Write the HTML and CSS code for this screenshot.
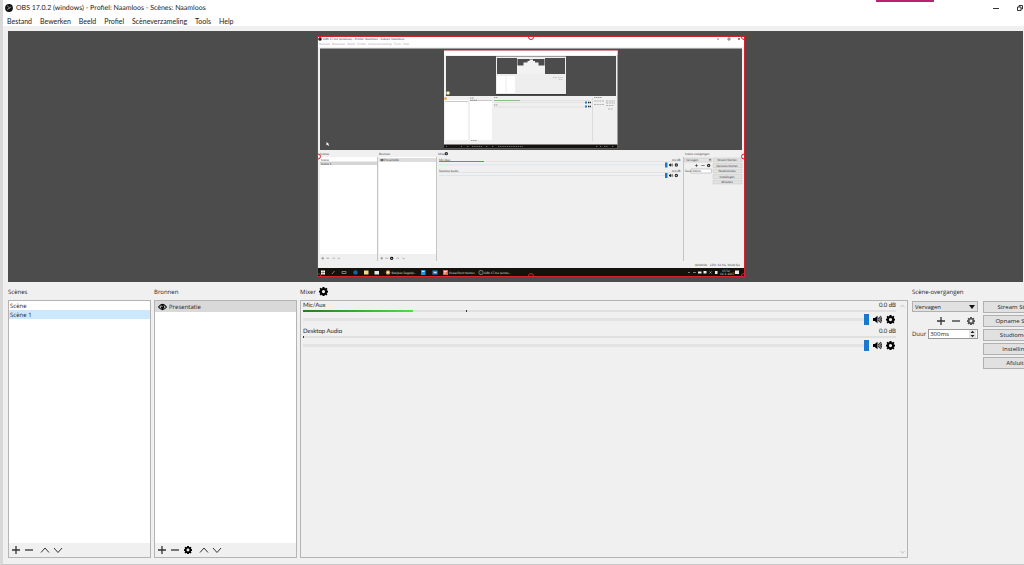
FILE: index.html
```html
<!DOCTYPE html>
<html lang="nl">
<head>
<meta charset="utf-8">
<title>OBS 17.0.2 (windows) - Profiel: Naamloos - Scènes: Naamloos</title>
<link rel="stylesheet" href="styles.css">
</head>
<body>
<svg class="defs" width="0" height="0" aria-hidden="true">
  <symbol id="gear" viewBox="0 0 16 16"><path fill="currentColor" fill-rule="evenodd" d="M6.300 0h3.400l.4 2.200 1 .4 1.900-1.300 2 2-1.300 1.900.4 1 2.200.4v3.200l-2.200.4-.4 1 1.300 1.900-2 2-1.900-1.300-1 .4-.4 2.200H6.300l-.4-2.200-1-.4L3 15.100l-2-2 1.300-1.900-.4-1L0 9.800V6.600l1.900-.4.4-1L1 3.300l2-2 1.900 1.300 1-.4zM8 5.200a2.900 2.900 0 1 0 0 5.800 2.900 2.900 0 0 0 0-5.800z"/></symbol>
  <symbol id="plus" viewBox="0 0 10 10"><path d="M5 1v8M1 5h8" fill="none" stroke="currentColor" stroke-width="1.300"/></symbol>
  <symbol id="minus" viewBox="0 0 10 10"><path d="M1 5h8" fill="none" stroke="currentColor" stroke-width="1.300"/></symbol>
  <symbol id="up" viewBox="0 0 10 10"><path d="M1 7.500 5 3l4 4.500" fill="none" stroke="currentColor"/></symbol>
  <symbol id="down" viewBox="0 0 10 10"><path d="M1 3l4 4.500L9 3" fill="none" stroke="currentColor"/></symbol>
  <symbol id="speaker" viewBox="0 0 10 10"><path d="M0 3.200h2L5 .8v8.400L2 6.800H0z" fill="currentColor"/><path d="M6 3q1.300 2 0 4M7.200 2q2 3 0 6M8.400 1q2.600 4 0 8" fill="none" stroke="currentColor"/></symbol>
  <symbol id="eye" viewBox="0 0 10 8"><path d="M.6 4Q5-1.800 9.400 4 5 9.800.6 4z" fill="#fff" stroke="#000" stroke-width="1.200"/><circle cx="5" cy="4" r="2.200"/><circle cx="4.400" cy="3.300" r=".6" fill="#fff"/></symbol>
</svg>

<div class="window">
  <span class="share-tab"></span>
  <header class="titlebar">
    <svg class="logo" viewBox="0 0 16 16"><circle cx="8" cy="8" r="7.800" fill="#111"/><path d="M5 3q1 4 4 4.500M12.500 6q-4 .5-4.500 4M4 11q4-.5 4.500-3.500" fill="none" stroke="#bbb" stroke-width="1.300"/></svg>
    <h1 class="title">OBS 17.0.2 (windows) - Profiel: Naamloos - Scènes: Naamloos</h1>
    <button class="caption" aria-label="Minimaliseren"><svg viewBox="0 0 6 6"><path d="M0 3.500h6" stroke="#333"/></svg></button>
    <button class="caption" aria-label="Herstellen"><svg viewBox="0 0 6 6"><path d="M.5 2h3.500v3.500H.5zM2 2V.5h3.500V4H4" fill="none" stroke="#333"/></svg></button>
  </header>
  <nav class="menubar">
    <button>Bestand</button><button>Bewerken</button><button>Beeld</button><button>Profiel</button><button>Scèneverzameling</button><button>Tools</button><button>Help</button>
  </nav>

  <main class="content">
    <section class="preview" aria-label="Voorbeeld">
      <svg class="capture" viewBox="317 36 428 241">
        <rect x="317" y="36" width="428" height="241" fill="#f0f0f0"/>
        <rect x="317" y="36" width="428" height="11" fill="#fff"/>
        <circle cx="320" cy="39" r="1.700"/>
        <g class="micro">
          <text x="323" y="40">OBS 17.0.2 (windows) - Profiel: Naamloos - Scènes: Naamloos</text>
          <text x="319" y="45" fill="#baa">Bestand &#160; Bewerken &#160; Beeld &#160; Profiel &#160; Scèneverzameling &#160; Tools &#160; Help</text>
        </g>
        <path d="M717 39h2M728 38h2v2h-2zM738 38l2 2m0-2-2 2" stroke="#333" stroke-width=".6" fill="none"/>
        <rect x="320" y="48.500" width="422" height="101.500" fill="#4c4c4c"/>
        <path d="M326.500 142v3.500l1-.8 1 1.300.5-.5-.8-1.200h1z" fill="#fff"/>

        <rect x="444" y="50" width="173.500" height="98.500" fill="#f0f0f0"/>
        <rect x="444" y="51" width="173.500" height="4" fill="#fff"/>
        <rect x="446" y="56" width="170" height="40" fill="#4c4c4c"/>
        <path d="M444 50.500h173" stroke="#c66" stroke-width=".7"/>
        <rect x="496" y="56.500" width="70" height="38" fill="#eee"/>
        <rect x="497" y="58" width="68" height="16" fill="#4c4c4c"/>
        <path d="M497 76h18v17h-18z" fill="#fff"/>
        <path d="M506 76v17" stroke="#ddd" stroke-width=".6"/>
        <rect x="517" y="58" width="28" height="16" fill="#f2f2f2"/>
        <path d="M517.500 59h27v6.500h-6V62.500h-3.500V61h-2v-1.500h-3.500V61h-2v1.500h-4v3h-6z" fill="#4c4c4c"/>
        <path d="M496 94.500h70" stroke="#222" stroke-width=".8"/>
        <path d="M553 77.500h4M558 77.500h5M559 79.500h4" stroke="#bbb" stroke-width=".8" stroke-dasharray="1.500 .6"/>
        <path d="M445 100h23v40h-23zM470 100h22v40h-22z" fill="#fff"/>
        <path d="M445 101.500h23M470 100.500h22" stroke="#bbb" stroke-width=".8"/>
        <path d="M470 98h4M470 100.300h7M494 97.500h4M494 105h4M594 97.500h8M471 140.500h6" stroke="#777" stroke-width=".7" stroke-dasharray="1.500 .5"/>
        <path d="M494 100.500h26" stroke="#6db36d" stroke-width=".8"/>
        <path d="M520 100.500h70M494 102.500h92M494 107h92" stroke="#dadada" stroke-width=".7"/>
        <path d="M585 102.500h2M585 106.500h2" stroke="#1679d2" stroke-width="2"/>
        <path d="M588 102.500h3M588 106.500h3" stroke="#222" stroke-width="1.700" stroke-dasharray="1.200 .5"/>
        <path d="M592.500 98v43" stroke="#ccc" stroke-width=".6"/>
        <path d="M594 101h10M594 104.500h10M606 101h9M606 103h9M606 105.500h8M608 109h5" stroke="#aaa" stroke-width=".9" stroke-dasharray="2 .7"/>
        <circle cx="448" cy="93" r="1.800" fill="#f4efba"/><circle cx="445.500" cy="98.500" r="1.500" fill="#efad4c"/>
        <rect x="444" y="144.500" width="173.500" height="4" fill="#14110e"/>
        <path d="M446 146.500h1m14 0h1m5 0h2m3 0h10m4 0h2m4 0h2m4 0h25m73 0h2m2 0h2m2 0h4m4 0h2" stroke="#888" stroke-width=".8" stroke-dasharray="1.300 .9"/>

        <g class="micro">
          <text x="320" y="155">Scènes</text><text x="379" y="155">Bronnen</text><text x="438" y="155">Mixer</text><text x="685" y="155">Scène-overgangen</text>
        </g>
        <path d="M320 157h57v97h-57zM379 157h57v97h-57z" fill="#fff"/>
        <path d="M377.500 157v104M436.500 157v104M683.500 157v104" stroke="#c4c4c4"/>
        <rect x="320" y="161.500" width="57" height="3.500" fill="#d6d6d6"/>
        <rect x="379" y="158" width="57" height="4" fill="#ddd"/>
        <use href="#gear" x="444.500" y="152" width="3.500" height="3.500"/>
        <use href="#eye" x="380" y="158.500" width="4" height="3"/>
        <g class="micro">
          <text x="321" y="161">Scène</text><text x="321" y="164.500">Scène 1</text><text x="384" y="161.200">Presentatie</text>
          <text x="439" y="160.500">Mic/Aux</text><text x="439" y="171.500">Desktop Audio</text><text x="672" y="160.500">0.0 dB</text><text x="672" y="171.500">0.0 dB</text>
        </g>
        <path d="M439 161.500h45" stroke="#4aa84a"/>
        <path d="M484 161.500h194M439 172.500h239" stroke="#ddd" stroke-width=".7"/>
        <path d="M439 164.800h227M439 175.500h227" stroke="#d3e3ee" stroke-width=".8"/>
        <path d="M665 162.500h2.500v5H665zM665 173h2.500v5H665z" fill="#1679d2"/>
        <use href="#speaker" x="669" y="163" width="4" height="4"/><use href="#speaker" x="669" y="173.500" width="4" height="4"/>
        <use href="#gear" x="674.500" y="163" width="3.500" height="4"/><use href="#gear" x="674.500" y="173.500" width="3.500" height="4"/>
        <rect x="684.500" y="158" width="27" height="4" fill="#e3e3e3" stroke="#bbb" stroke-width=".4"/>
        <rect x="691" y="169" width="20.500" height="4" fill="#fff" stroke="#888" stroke-width=".4"/>
        <path d="M709 159.500h2l-1 1.300z"/>
        <use href="#plus" x="694.500" y="163.500" width="4" height="4"/><use href="#minus" x="701" y="163.500" width="4" height="4"/><use href="#gear" x="707" y="163.500" width="3.500" height="4"/>
        <g fill="#e1e1e1" stroke="#bbb" stroke-width=".4"><path d="M713 158h29v4h-29zM713 163.500h29v4h-29zM713 169h29v4h-29zM713 174.500h29v4h-29zM713 180h29v4h-29z"/></g>
        <g class="micro">
          <text x="686" y="161">Vervagen</text><text x="685" y="172">Duur</text><text x="692" y="172">300ms</text>
          <g text-anchor="middle"><text x="727" y="161">Stream Starten</text><text x="727" y="166.500">Opname Starten</text><text x="727" y="172">Studiomodus</text><text x="727" y="177.500">Instellingen</text><text x="727" y="183">Afsluiten</text></g>
          <text x="695" y="266">00:00:00</text><text x="710" y="266">CPU: 12.1%, 30.00 fps</text>
        </g>
        <g color="#555"><use href="#plus" x="321" y="256.500" width="3.500" height="3.500"/><use href="#minus" x="326" y="256.500" width="3.500" height="3.500"/><use href="#up" x="332" y="256.500" width="3.500" height="3.500"/><use href="#down" x="337" y="256.500" width="3.500" height="3.500"/><use href="#plus" x="380" y="256.500" width="3.500" height="3.500"/><use href="#minus" x="385" y="256.500" width="3.500" height="3.500"/><use href="#gear" x="390" y="256.500" width="3.500" height="3.500" color="#000"/><use href="#up" x="396" y="256.500" width="3.500" height="3.500"/><use href="#down" x="402" y="256.500" width="3.500" height="3.500"/></g>

        <rect x="317" y="268" width="428" height="8" fill="#15110c"/>
        <path d="M321 270.500h4v4h-4z" fill="#fff"/><path d="M323 270.500v4m-2-2h4" stroke="#15110c" stroke-width=".4"/>
        <path d="M332 274l2.500-3M342 271.500h4v2h-4z" fill="none" stroke="#aaa" stroke-width=".7"/>
        <circle cx="355.500" cy="272.500" r="2.200" fill="#17629f"/><path d="M364 270.500h4.500v4H364z" fill="#f5d889"/><path d="M374.500 271h4.500v3.500h-4.500z" fill="#e8e8e8"/>
        <circle cx="388" cy="272.500" r="2.200" fill="#d94"/><circle cx="388" cy="272.500" r="1" fill="#fff"/>
        <path d="M421 270h4.500v5H421zM432.500 270.500h5v4h-5z" fill="#2492dc"/><path d="M443 270h5v5h-5z" fill="#dc6845"/>
        <circle cx="481" cy="272.500" r="2.200" fill="#222" stroke="#aaa" stroke-width=".6"/>
        <path d="M422 271.500h2.500M434 272.500h2.500M444 271.500h3M444 273h2" stroke="#fff" stroke-width=".8"/>
        <g class="micro light"><text x="391.500" y="273.500">Bekijken Dagelijk...</text><text x="449" y="273.500">PowerPoint Starten</text><text x="484" y="273.500">OBS 17.0.2 (windo...</text><text x="722" y="271.700">15:52</text><text x="720" y="275">12-1-2017</text></g>
        <path d="M688 273l1-1 1 1M693 272.500h3" stroke="#aaa" stroke-width=".7" fill="none"/>
        <path d="M698 271.500h3.500v2H698zM703.500 271h3v2.500h-3zM715 271h2.500v3H715zM735 270.500h4v3.500h-4z" fill="#eee"/><path d="M709.500 271.500l2 2m0-2-2 2" stroke="#ccc" stroke-width=".6"/>
        <g class="handles"><rect x="317.500" y="36.500" width="427" height="240"/><circle cx="318" cy="37" r="2.500"/><circle cx="531" cy="37" r="2.500"/><circle cx="744" cy="37" r="2.500"/><circle cx="318" cy="156.500" r="2.500"/><circle cx="744" cy="156.500" r="2.500"/><circle cx="318" cy="276" r="2.500"/><circle cx="531" cy="276" r="2.500"/><circle cx="744" cy="276" r="2.500"/></g>
      </svg>
    </section>

    <div class="docks">
      <section class="dock">
        <h2>Scènes</h2>
        <div class="panel list">
          <ul><li>Scène</li><li class="selected">Scène 1</li></ul>
          <div class="tools">
            <button aria-label="Scène toevoegen"><svg><use href="#plus"/></svg></button><button aria-label="Scène verwijderen"><svg><use href="#minus"/></svg></button><button class="spaced" aria-label="Scène omhoog"><svg><use href="#up"/></svg></button><button aria-label="Scène omlaag"><svg><use href="#down"/></svg></button>
          </div>
        </div>
      </section>
      <section class="dock">
        <h2>Bronnen</h2>
        <div class="panel list">
          <ul><li class="source"><svg class="eye"><use href="#eye"/></svg>Presentatie</li></ul>
          <div class="tools">
            <button aria-label="Bron toevoegen"><svg><use href="#plus"/></svg></button><button aria-label="Bron verwijderen"><svg><use href="#minus"/></svg></button><button class="solid" aria-label="Broninstellingen"><svg><use href="#gear"/></svg></button><button class="spaced" aria-label="Bron omhoog"><svg><use href="#up"/></svg></button><button aria-label="Bron omlaag"><svg><use href="#down"/></svg></button>
          </div>
        </div>
      </section>
      <section class="dock">
        <h2>Mixer <button class="solid" aria-label="Mixerinstellingen"><svg><use href="#gear"/></svg></button></h2>
        <div class="panel mixer">
          <div class="channels">
            <div class="channel">
              <div class="names"><label for="mic">Mic/Aux</label><output>0.0 dB</output></div>
              <div class="meter"><span class="level"></span><span class="peak"></span></div>
              <div class="controls"><input id="mic" type="range" value="100"><button class="solid" aria-label="Dempen"><svg><use href="#speaker"/></svg></button><button class="solid" aria-label="Instellingen Mic/Aux"><svg><use href="#gear"/></svg></button></div>
            </div>
            <div class="channel">
              <div class="names"><label for="desk">Desktop Audio</label><output>0.0 dB</output></div>
              <div class="meter"><span class="silent"></span></div>
              <div class="controls"><input id="desk" type="range" value="100"><button class="solid" aria-label="Dempen"><svg><use href="#speaker"/></svg></button><button class="solid" aria-label="Instellingen Desktop Audio"><svg><use href="#gear"/></svg></button></div>
            </div>
          </div>
          <div class="scroll"><svg><use href="#up"/></svg><svg><use href="#down"/></svg></div>
        </div>
      </section>
      <section class="dock last">
        <h2>Scène-overgangen</h2>
        <div class="side">
          <div class="transition">
            <div class="combo"><select aria-label="Overgang"><option>Vervagen</option></select><i class="arrow"></i></div>
            <div class="tools"><button aria-label="Overgang toevoegen"><svg><use href="#plus"/></svg></button><button aria-label="Overgang verwijderen"><svg><use href="#minus"/></svg></button><button class="dim" aria-label="Overgangsinstellingen"><svg><use href="#gear"/></svg></button></div>
            <div class="duration"><label for="dur">Duur</label><div class="spin"><input id="dur" type="text" value="300ms"><svg viewBox="0 0 7 8"><path d="M0 0h7v8H0z" fill="#e6e6e6"/><path d="M1.500 3h4L3.500 .8zM1.500 5h4L3.500 7.200z" fill="#222"/></svg></div></div>
          </div>
          <div class="actions"><button>Stream Starten</button><button>Opname Starten</button><button>Studiomodus</button><button>Instellingen</button><button>Afsluiten</button></div>
        </div>
      </section>
    </div>
  </main>
</div>
</body>
</html>
```
FILE: styles.css
```css
* { box-sizing: border-box; }
body { margin: 0; background: #fff; color: #1c1c1c; font: 7px/10px Lato, "Noto Sans", sans-serif; text-rendering: geometricPrecision; }
button, input, select, h1, h2, ul { margin: 0; padding: 0; border: 0; background: none; color: inherit; font: inherit; }
ul { list-style: none; }
svg { display: block; }
.defs { position: absolute; }

.window { position: relative; display: flex; flex-direction: column; height: 100vh; overflow: hidden; border-left: 3px solid #d8d8d8; border-bottom: 1px solid #c8c8c8; }
.share-tab { position: absolute; top: 0; right: 90px; width: 58px; height: 2px; background: #b9226c; }
.titlebar { display: flex; align-items: center; height: 15px; padding: 1px 0 0 2px; }
.logo { width: 8px; height: 8px; margin-right: 3px; }
.title { flex: 1; white-space: nowrap; }
.caption { margin-right: 18px; }
.caption:last-child { margin-right: 1px; }
.caption svg { width: 6px; height: 6px; }
.menubar { display: flex; gap: 8px; height: 11px; padding-left: 4px; }

.content { flex: 1; display: flex; flex-direction: column; min-height: 0; padding: 5px 0 6px 5px; background: #f0f0f0; }
.preview { flex: 1; display: flex; justify-content: center; min-height: 0; margin-right: 1px; padding: 5px 0; background: #4c4c4c; }
.capture { width: auto; height: 100%; margin-left: 30px; }
.micro { font-size: 3px; fill: #444; }
.light { fill: #ddd; }
.handles { fill: none; stroke: #d8202f; stroke-width: 1; }

.docks { display: grid; grid-template-columns: 143fr 143fr 608fr 113px; gap: 3px; height: 276px; font: 6px/10px "Open Sans", "Noto Sans", sans-serif; }
.dock { display: flex; flex-direction: column; min-width: 0; }
.dock h2 { display: flex; align-items: center; gap: 3px; height: 18px; padding-top: 1px; white-space: nowrap; }
.dock h2 svg { width: 9px; height: 9px; }
.panel { flex: 1; display: flex; min-height: 0; border: 1px solid #b4b4b4; }
.list { flex-direction: column; }
.list ul { flex: 1; background: #fff; }
.list li { height: 9px; padding-left: 1px; line-height: 10px; }
.list .selected { background: #cce8ff; }
.list .source { display: flex; align-items: center; gap: 2px; height: 11px; padding: 1px 0 0 3px; background: #d9d9d9; }
.eye { width: 9px; height: 8px; }
.tools { display: flex; align-items: center; gap: 3px; height: 14px; padding-left: 2px; color: #333; }
.tools svg { width: 10px; height: 10px; }
.tools .spaced { margin-left: 3px; }
.solid { color: #000; }
.tools .solid svg { width: 8px; height: 8px; margin: 1px; }
.dim { color: #555; }
.tools .dim svg { width: 8px; height: 8px; margin: 1px; }

.channels { flex: 1; padding: 0 2px; }
.channel { height: 26px; }
.names { display: flex; justify-content: space-between; height: 9px; font-family: Lato, "Noto Sans", sans-serif; }
.meter { position: relative; height: 2px; background: #e0e0e0; }
.level, .peak, .silent { position: absolute; top: 0; left: 0; height: 2px; }
.level { width: 18.5%; background: linear-gradient(90deg, #237c23, #4fdc4f); }
.peak, .silent { width: 1px; background: #333; }
.peak { left: 27.5%; }
.controls { display: flex; align-items: center; gap: 4px; height: 14px; padding-right: 1px; }
.controls svg { width: 9px; height: 9px; }
.controls input { flex: 1; min-width: 0; height: 12px; appearance: none; }
.controls input::-webkit-slider-runnable-track { height: 3px; background: #e3e3e3; }
.controls input::-webkit-slider-thumb { appearance: none; width: 5px; height: 11px; margin-top: -4px; background: #1679d2; }
.scroll { display: flex; flex-direction: column; justify-content: space-between; width: 9px; padding: 2px; color: #999; }
.scroll svg { width: 5px; height: 6px; }

.last { overflow: hidden; padding-left: 1px; }
.side { display: grid; grid-template-columns: 66px 71px; gap: 5px; padding-top: 1px; }
.combo { position: relative; }
.combo select { width: 100%; height: 11px; padding: 0 2px; border: 1px solid #b0b0b0; background: #e1e1e1; appearance: none; }
.arrow { position: absolute; top: 4px; right: 3px; border: 3px solid transparent; border-top: 4px solid #111; border-bottom: 0; }
.transition .tools { justify-content: flex-end; gap: 5px; height: 17px; padding-right: 2px; }
.duration { display: flex; align-items: center; gap: 2px; }
.spin { flex: 1; display: flex; align-items: center; min-width: 0; height: 10px; padding-right: 1px; border: 1px solid #999; background: #fff; }
.spin input { flex: 1; min-width: 0; height: 8px; padding-left: 1px; }
.spin svg { width: 7px; height: 8px; }
.actions { display: flex; flex-direction: column; gap: 2px; }
.actions button { height: 12px; border: 1px solid #b0b0b0; background: #e1e1e1; white-space: nowrap; }
```
